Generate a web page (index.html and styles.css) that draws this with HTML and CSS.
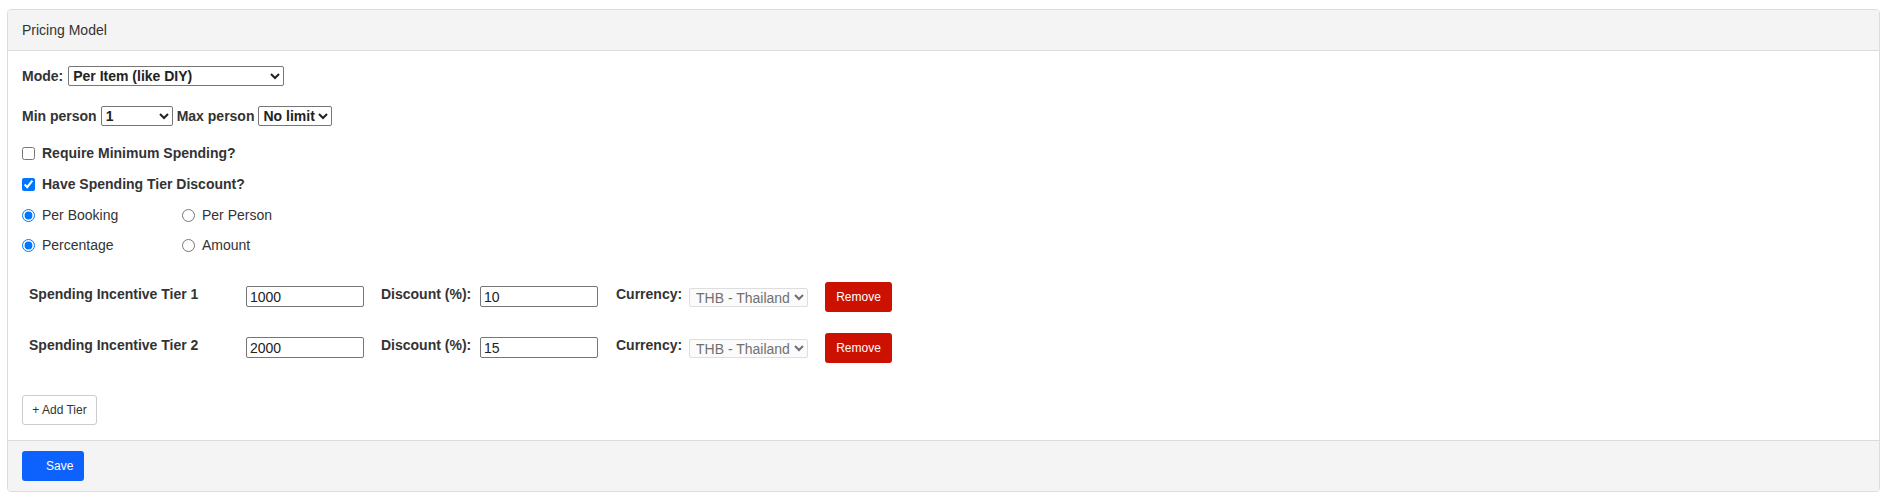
FILE: index.html
```html
<!DOCTYPE html>
<html>
<head>
<meta charset="utf-8">
<link rel="stylesheet" href="styles.css">
</head>
<body>
<div class="page">
  <div class="card">
    <div class="card-header">Pricing Model</div>
    <div class="card-body">
      <div class="row row-mode">
        <label class="lbl">Mode:</label>
        <select class="sel sel-mode"><option>Per Item (like DIY)</option></select>
      </div>
      <div class="row row-person">
        <label class="lbl">Min person</label>
        <select class="sel sel-min"><option>1</option></select>
        <label class="lbl">Max person</label>
        <select class="sel sel-max"><option>No limit</option></select>
      </div>
      <label class="row check-row check-first"><input type="checkbox" class="chk"><span class="lbl">Require Minimum Spending?</span></label>
      <label class="row check-row"><input type="checkbox" class="chk" checked><span class="lbl">Have Spending Tier Discount?</span></label>
      <div class="row radio-row">
        <label class="radio-opt"><input type="radio" name="per" class="rad" checked>Per Booking</label>
        <label class="radio-opt"><input type="radio" name="per" class="rad">Per Person</label>
      </div>
      <div class="row radio-row">
        <label class="radio-opt"><input type="radio" name="kind" class="rad" checked>Percentage</label>
        <label class="radio-opt"><input type="radio" name="kind" class="rad">Amount</label>
      </div>
      <div class="tiers">
        <div class="tier-row">
          <span class="tier-label">Spending Incentive Tier 1</span>
          <input type="text" class="txt" value="1000">
          <span class="disc-label">Discount (%):</span>
          <input type="text" class="txt" value="10">
          <span class="cur-label">Currency:</span>
          <select class="cur-sel" disabled><option>THB - Thailand</option></select>
          <button class="btn-remove">Remove</button>
        </div>
        <div class="tier-row">
          <span class="tier-label">Spending Incentive Tier 2</span>
          <input type="text" class="txt" value="2000">
          <span class="disc-label">Discount (%):</span>
          <input type="text" class="txt" value="15">
          <span class="cur-label">Currency:</span>
          <select class="cur-sel" disabled><option>THB - Thailand</option></select>
          <button class="btn-remove">Remove</button>
        </div>
      </div>
      <button class="btn-add">+ Add Tier</button>
    </div>
    <div class="card-footer">
      <button class="btn-save">Save</button>
    </div>
  </div>
</div>
</body>
</html>
```
FILE: styles.css
```css
html, body {
  margin: 0;
  padding: 0;
  background: #fff;
}
body {
  font-family: "Liberation Sans", Arial, sans-serif;
  font-size: 14px;
  color: #333;
}
.page {
  padding: 9px 7px;
}
.card {
  border: 1px solid #dcdcdc;
  border-radius: 4px;
  overflow: hidden;
}
.card-header {
  background: #f4f4f4;
  border-bottom: 1px solid #dcdcdc;
  height: 40px;
  line-height: 40px;
  padding: 0 14px;
}
.card-body {
  padding: 15px 14px 15px 14px;
}
.row {
  display: flex;
  align-items: center;
  height: 20px;
  line-height: 20px;
}
.lbl {
  font-weight: bold;
}
.sel {
  font-family: inherit;
  font-size: 14px;
  font-weight: bold;
  color: #222;
  height: 20px;
  margin: 0;
  border: 1px solid #767676;
  border-radius: 2px;
  background: #fff;
}
.row-mode .lbl {
  margin-right: 5px;
}
.sel-mode {
  width: 216px;
}
.row-person {
  margin-top: 20px;
}
.row-person .lbl {
  margin-right: 4px;
}
.sel-min {
  width: 72px;
  margin-right: 4px;
}
.sel-max {
  width: auto;
}
.check-row {
  margin-top: 17px;
}
.check-row + .check-row {
  margin-top: 11px;
}
.chk {
  width: 13px;
  height: 13px;
  margin: 0 7px 0 0;
}
.radio-row {
  margin-top: 11px;
}
.radio-row + .radio-row {
  margin-top: 10px;
}
.radio-opt {
  display: flex;
  align-items: center;
  width: 160px;
}
.rad {
  width: 13px;
  height: 13px;
  margin: 0 7px 0 0;
}
.tiers {
  margin-top: 27px;
  padding-left: 7px;
}
.tier-row {
  display: flex;
  align-items: flex-start;
  height: 30px;
}
.tier-row + .tier-row {
  margin-top: 21px;
}
.tier-label,
.disc-label,
.cur-label {
  font-weight: bold;
  line-height: 20px;
  margin-top: 2px;
}
.tier-label {
  width: 217px;
  flex: none;
}
.disc-label {
  width: 99px;
  flex: none;
  margin-left: 17px;
}
.cur-label {
  width: 73px;
  flex: none;
  margin-left: 18px;
}
.txt {
  box-sizing: border-box;
  width: 118px;
  height: 21px;
  margin: 4px 0 0 0;
  padding: 1px 3px 0;
  font-family: inherit;
  font-size: 14px;
  color: #222;
  border: 1px solid #767676;
  border-radius: 2px;
  flex: none;
}
.cur-sel {
  box-sizing: border-box;
  width: 119px;
  height: 19px;
  margin: 6px 0 0 0;
  padding: 0 0 0 2px;
  font-family: inherit;
  font-size: 14px;
  color: #707070;
  background: #fbfbfb;
  border: 1px solid #dedede;
  border-radius: 2px;
  opacity: 1;
  flex: none;
}
.btn-remove {
  margin-left: 17px;
  width: 67px;
  height: 30px;
  background: #cc1100;
  color: #fff;
  border: none;
  border-radius: 3px;
  font-family: inherit;
  font-size: 12px;
  padding: 0;
  flex: none;
}
.btn-add {
  display: block;
  margin-top: 32px;
  width: 75px;
  height: 30px;
  background: #fff;
  border: 1px solid #cccccc;
  border-radius: 3px;
  font-family: inherit;
  font-size: 12px;
  color: #333;
  padding: 0;
}
.card-footer {
  background: #f4f4f4;
  border-top: 1px solid #dcdcdc;
  padding: 10px 14px 10px;
}
.btn-save {
  display: block;
  height: 30px;
  width: 62px;
  padding: 0 11px 0 24px;
  text-align: left;
  background: #0d62fe;
  color: #fff;
  border: none;
  border-radius: 3px;
  font-family: inherit;
  font-size: 12px;
}
```
